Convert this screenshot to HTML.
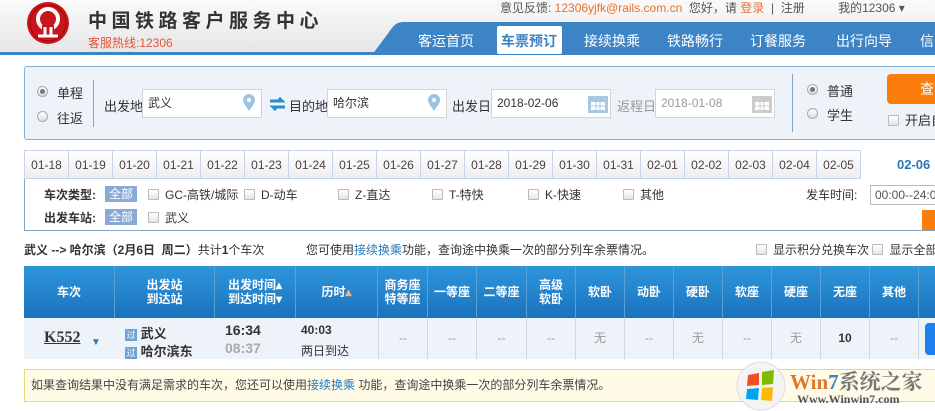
<!DOCTYPE html>
<html><head><meta charset="utf-8"><style>
*{margin:0;padding:0;box-sizing:border-box}
body{width:935px;height:411px;overflow:hidden;background:#fff;font-family:"Liberation Sans","Noto Sans CJK SC",sans-serif;font-size:12px;color:#333;position:relative}
.a{position:absolute;white-space:nowrap}
.inp{position:absolute;height:29px;border:1px solid #d4d4d4;background:#fff;font-size:12px;line-height:27px;padding-left:5px}
.radio{position:absolute;width:11px;height:11px;border-radius:50%;border:1px solid #aaa;background:linear-gradient(#fff,#ddd)}
.radio.on::after{content:"";position:absolute;left:2px;top:2px;width:5px;height:5px;border-radius:50%;background:#777}
.cb{display:inline-block;width:11px;height:11px;border:1px solid #bbb;background:linear-gradient(#fff,#e4e4e4);vertical-align:-1px;margin-right:6px;border-radius:1px}
.tab{position:absolute;top:150px;height:29px;width:44px;border:1px solid #c5d5e6;border-left:none;background:linear-gradient(#fff,#eee);text-align:center;line-height:28px;font-size:12px;color:#444}
.th{position:absolute;top:266px;height:52px;color:#fff;font-weight:bold;font-size:12px;text-align:center;display:flex;align-items:center;justify-content:center;line-height:14px;border-right:1px solid #5a9fd8}
.td{position:absolute;top:318px;height:41px;border-right:1px solid #cbd8e6;text-align:center;line-height:41px;color:#999;font-size:12px}
</style></head><body>
<div class="a" style="left:0;top:0;width:935px;height:53px;background:linear-gradient(#fafafa,#e6e6e6)"></div>
<div class="a" style="left:0;top:52px;width:935px;height:3px;background:#3d84c6"></div>
<svg class="a" style="left:0;top:0" width="935" height="56"><path d="M372 55 L392 28 Q396 22 404 22 L935 22 L935 55 Z" fill="#3d84c6"/></svg>
<svg class="a" style="left:25px;top:1px" width="46" height="44"><circle cx="23" cy="22" r="21" fill="#c8161d"/><circle cx="23" cy="22" r="18" fill="none" stroke="#a00" stroke-width="1"/><circle cx="23" cy="18" r="10" fill="none" stroke="#fff" stroke-width="4"/><rect x="17" y="24" width="12" height="8" fill="#c8161d"/><path d="M13 35 L33 35 M20 26 L20 35 M26 26 L26 35" stroke="#fff" stroke-width="3"/></svg>
<div class="a" style="left:88px;top:6px;font-size:19px;font-weight:bold;letter-spacing:4.5px;color:#333">中国铁路客户服务中心</div>
<div class="a" style="left:88px;top:34px;font-size:12px;color:#e0553a">客服热线:12306</div>
<div class="a" style="left:500px;top:-1px;font-size:12px;color:#555">意见反馈: <span style="color:#e57232">12306yjfk@rails.com.cn</span>&nbsp;&nbsp;您好，请 <span style="color:#e57232">登录</span>&nbsp;&nbsp;|&nbsp;&nbsp;注册&nbsp;&nbsp;&nbsp;&nbsp;&nbsp;&nbsp;&nbsp;&nbsp;&nbsp;&nbsp;我的12306 ▾</div>
<div class="a" style="left:497px;top:26px;width:65px;height:28px;background:#fff;border-radius:2px"></div>
<div class="a" style="left:418px;top:31px;font-size:14px;color:#fff">客运首页</div>
<div class="a" style="left:501px;top:31px;font-size:14px;color:#3d84c6;font-weight:bold">车票预订</div>
<div class="a" style="left:584px;top:31px;font-size:14px;color:#fff">接续换乘</div>
<div class="a" style="left:667px;top:31px;font-size:14px;color:#fff">铁路畅行</div>
<div class="a" style="left:750px;top:31px;font-size:14px;color:#fff">订餐服务</div>
<div class="a" style="left:836px;top:31px;font-size:14px;color:#fff">出行向导</div>
<div class="a" style="left:920px;top:31px;font-size:14px;color:#fff">信</div>
<div class="a" style="left:24px;top:66px;width:915px;height:74px;background:#eef3f9;border:1px solid #86aed2;border-radius:3px"></div>
<div class="radio on" style="left:37px;top:86px"></div><div class="a" style="left:57px;top:83px;font-size:13px">单程</div>
<div class="radio" style="left:37px;top:111px"></div><div class="a" style="left:57px;top:108px;font-size:13px">往返</div>
<div class="a" style="left:93px;top:80px;width:1px;height:47px;background:#7fa6c8"></div>
<div class="a" style="left:104px;top:96px;font-size:13px">出发地</div>
<div class="inp" style="left:142px;top:89px;width:120px">武义</div>
<svg class="a" style="left:242px;top:94px" width="14" height="18"><path d="M7 17 C3 11 1 9 1 6 A6 6 0 0 1 13 6 C13 9 11 11 7 17Z" fill="#9cc4e2"/><circle cx="7" cy="6" r="2" fill="#fff"/></svg>
<svg class="a" style="left:269px;top:97px" width="17" height="14"><path d="M1 4 H13 L10 1 M16 10 H4 L7 13" stroke="#2a8fc8" stroke-width="3" fill="none"/></svg>
<div class="a" style="left:289px;top:96px;font-size:13px">目的地</div>
<div class="inp" style="left:327px;top:89px;width:120px">哈尔滨</div>
<svg class="a" style="left:427px;top:94px" width="14" height="18"><path d="M7 17 C3 11 1 9 1 6 A6 6 0 0 1 13 6 C13 9 11 11 7 17Z" fill="#9cc4e2"/><circle cx="7" cy="6" r="2" fill="#fff"/></svg>
<div class="a" style="left:452px;top:96px;font-size:13px">出发日</div>
<div class="inp" style="left:491px;top:89px;width:120px">2018-02-06</div>
<svg class="a" style="left:588px;top:94px" width="20" height="19"><rect x="0" y="2" width="20" height="17" fill="#a5c8e4"/><rect x="3" y="8" width="14" height="8" fill="#fff"/><path d="M3 12H17M8 8V16M12 8V16" stroke="#a5c8e4"/></svg>
<div class="a" style="left:617px;top:96px;font-size:13px;color:#999">返程日</div>
<div class="inp" style="left:655px;top:89px;width:120px;color:#999">2018-01-08</div>
<svg class="a" style="left:752px;top:94px" width="20" height="19"><rect x="0" y="2" width="20" height="17" fill="#ccc"/><rect x="3" y="8" width="14" height="8" fill="#fff"/><path d="M3 12H17M8 8V16M12 8V16" stroke="#ccc"/></svg>
<div class="a" style="left:792px;top:74px;width:1px;height:58px;background:#7fa6c8"></div>
<div class="radio on" style="left:807px;top:84px"></div><div class="a" style="left:827px;top:81px;font-size:13px">普通</div>
<div class="radio" style="left:807px;top:108px"></div><div class="a" style="left:827px;top:105px;font-size:13px">学生</div>
<div class="a" style="left:887px;top:74px;width:60px;height:30px;background:#fb7d0c;border-radius:4px;color:#fff;font-size:14px;line-height:30px;padding-left:33px">查</div>
<div class="a" style="left:888px;top:110px;font-size:13px"><span class="cb"></span>开启自</div>
<div class="a" style="left:24px;top:150px;width:1px;height:29px;background:#c5d5e6"></div>
<div class="tab" style="left:25px">01-18</div><div class="tab" style="left:69px">01-19</div><div class="tab" style="left:113px">01-20</div><div class="tab" style="left:157px">01-21</div><div class="tab" style="left:201px">01-22</div><div class="tab" style="left:245px">01-23</div><div class="tab" style="left:289px">01-24</div><div class="tab" style="left:333px">01-25</div><div class="tab" style="left:377px">01-26</div><div class="tab" style="left:421px">01-27</div><div class="tab" style="left:465px">01-28</div><div class="tab" style="left:509px">01-29</div><div class="tab" style="left:553px">01-30</div><div class="tab" style="left:597px">01-31</div><div class="tab" style="left:641px">02-01</div><div class="tab" style="left:685px">02-02</div><div class="tab" style="left:729px">02-03</div><div class="tab" style="left:773px">02-04</div><div class="tab" style="left:817px">02-05</div>
<div class="a" style="left:897px;top:157px;font-size:13px;font-weight:bold;color:#2a78b8">02-06</div>
<div class="a" style="left:24px;top:179px;width:915px;height:52px;border:1px solid #7fa6c8;border-top:none"></div>
<div class="a" style="left:44px;top:186px;font-weight:bold;font-size:12px">车次类型:</div>
<div class="a" style="left:105px;top:186px;background:#8aa9d4;color:#fff;padding:0 4px;height:16px;line-height:16px">全部</div>
<div class="a" style="left:148px;top:186px"><span class="cb"></span>GC-高铁/城际</div>
<div class="a" style="left:244px;top:186px"><span class="cb"></span>D-动车</div>
<div class="a" style="left:338px;top:186px"><span class="cb"></span>Z-直达</div>
<div class="a" style="left:432px;top:186px"><span class="cb"></span>T-特快</div>
<div class="a" style="left:528px;top:186px"><span class="cb"></span>K-快速</div>
<div class="a" style="left:623px;top:186px"><span class="cb"></span>其他</div>
<div class="a" style="left:806px;top:186px;font-size:12px">发车时间:</div>
<div class="a" style="left:870px;top:185px;width:80px;height:20px;border:1px solid #bbb;padding-left:4px;line-height:18px;font-size:12px;color:#555">00:00--24:00</div>
<div class="a" style="left:922px;top:210px;width:20px;height:20px;background:#fb7d0c"></div>
<div class="a" style="left:44px;top:209px;font-weight:bold">出发车站:</div>
<div class="a" style="left:105px;top:209px;background:#8aa9d4;color:#fff;padding:0 4px;height:16px;line-height:16px">全部</div>
<div class="a" style="left:148px;top:209px"><span class="cb"></span>武义</div>
<div class="a" style="left:24px;top:241px;font-size:12px"><b>武义 --&gt; 哈尔滨（2月6日&nbsp; 周二）</b>共计<b>1</b>个车次</div>
<div class="a" style="left:306px;top:241px;font-size:12px">您可使用<span style="color:#2a78b8">接续换乘</span>功能，查询途中换乘一次的部分列车余票情况。</div>
<div class="a" style="left:756px;top:241px"><span class="cb"></span>显示积分兑换车次 <span class="cb"></span>显示全部</div>
<div class="a" style="left:24px;top:266px;width:915px;height:52px;background:linear-gradient(#2f96dc,#1a72bd)"></div>
<div class="th" style="left:24px;width:91px">车次</div>
<div class="th" style="left:115px;width:100px">出发站<br>到达站</div>
<div class="th" style="left:215px;width:81px">出发时间▴<br>到达时间▾</div>
<div class="th" style="left:296px;width:82px">历时 <span style="color:#f4b183">▴</span></div>
<div class="th" style="left:378px;width:50px">商务座<br>特等座</div>
<div class="th" style="left:428px;width:49px">一等座</div>
<div class="th" style="left:477px;width:50px">二等座</div>
<div class="th" style="left:527px;width:49px">高级<br>软卧</div>
<div class="th" style="left:576px;width:49px">软卧</div>
<div class="th" style="left:625px;width:49px">动卧</div>
<div class="th" style="left:674px;width:49px">硬卧</div>
<div class="th" style="left:723px;width:49px">软座</div>
<div class="th" style="left:772px;width:49px">硬座</div>
<div class="th" style="left:821px;width:49px">无座</div>
<div class="th" style="left:870px;width:49px">其他</div>
<div class="a" style="left:24px;top:318px;width:915px;height:41px;background:#eef3f9"></div>
<div class="a" style="left:44px;top:329px;font-size:16px;font-weight:bold;text-decoration:underline;color:#333;font-family:'Liberation Serif',serif">K552</div>
<div class="a" style="left:91px;top:337px;color:#2a78b8;font-size:10px">▼</div>
<div class="a" style="left:125px;top:323px;font-size:13px"><span style="display:inline-block;width:12px;height:12px;background:#6ea2d4;color:#fff;font-size:9px;line-height:12px;text-align:center">过</span> <b>武义</b></div>
<div class="a" style="left:125px;top:341px;font-size:13px"><span style="display:inline-block;width:12px;height:12px;background:#6ea2d4;color:#fff;font-size:9px;line-height:12px;text-align:center">过</span> <b>哈尔滨东</b></div>
<div class="a" style="left:225px;top:322px;font-size:14px;font-weight:bold;color:#333">16:34</div>
<div class="a" style="left:225px;top:340px;font-size:14px;font-weight:bold;color:#aaa">08:37</div>
<div class="a" style="left:301px;top:323px;font-size:12px;font-weight:bold">40:03</div>
<div class="a" style="left:301px;top:342px;font-size:12px">两日到达</div>
<div class="td" style="left:378px;width:50px;border-left:1px solid #cbd8e6">--</div>
<div class="td" style="left:428px;width:49px">--</div>
<div class="td" style="left:477px;width:50px">--</div>
<div class="td" style="left:527px;width:49px">--</div>
<div class="td" style="left:576px;width:49px">无</div>
<div class="td" style="left:625px;width:49px">--</div>
<div class="td" style="left:674px;width:49px">无</div>
<div class="td" style="left:723px;width:49px">--</div>
<div class="td" style="left:772px;width:49px">无</div>
<div class="td" style="left:821px;width:49px;color:#333;font-weight:bold">10</div>
<div class="td" style="left:870px;width:49px">--</div>
<div class="a" style="left:925px;top:323px;width:20px;height:32px;background:#1d7ff0;border-radius:4px"></div>
<div class="a" style="left:24px;top:369px;width:915px;height:33px;background:#fffbe6;border:1px solid #e6d77a;line-height:31px;padding-left:6px;font-size:12px;color:#444">如果查询结果中没有满足需求的车次，您还可以使用<span style="color:#2a78b8">接续换乘</span> 功能，查询途中换乘一次的部分列车余票情况。</div>
<svg class="a" style="left:736px;top:361px" width="50" height="50"><circle cx="25" cy="25" r="24" fill="#f4f4f4" stroke="#ddd"/><path d="M12 14 L23 12 L23 24 L11 25Z" fill="#f25022"/><path d="M26 11 L38 9 L37 23 L26 24Z" fill="#7fba00"/><path d="M11 28 L23 27 L22 39 L10 38Z" fill="#00a4ef"/><path d="M26 27 L37 26 L36 40 L25 39Z" fill="#ffb900"/></svg>
<div class="a" style="left:790px;top:366px;font-size:21px;font-weight:bold;color:#e2762a;font-family:'Liberation Serif',serif">Win<span style="color:#3a84c6">7</span><span style="color:#777;font-family:'Noto Serif CJK SC',serif">系统之家</span></div>
<div class="a" style="left:797px;top:392px;font-size:12px;font-weight:bold;color:#555;font-family:'Liberation Serif',serif">Www.Winwin7.com</div>
</body></html>
